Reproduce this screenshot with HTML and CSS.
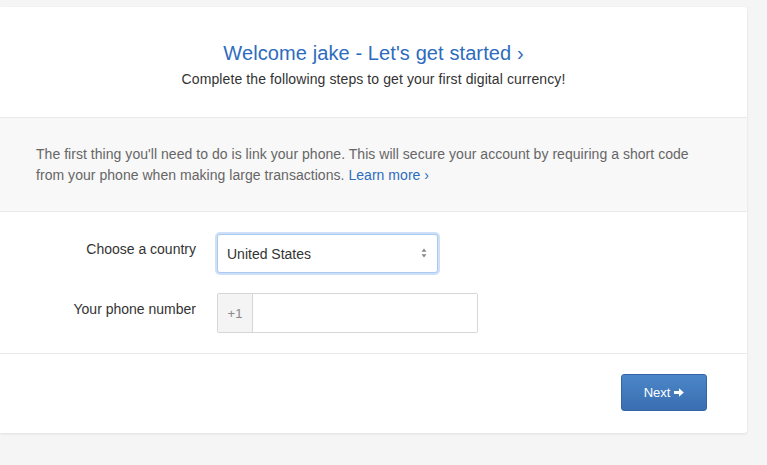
FILE: index.html
```html
<!DOCTYPE html>
<html>
<head>
<meta charset="utf-8">
<link rel="stylesheet" href="styles.css">
</head>
<body>
<div class="card">
  <div class="header">
    <h1 class="title">Welcome jake - Let's get started ›</h1>
    <p class="subtitle">Complete the following steps to get your first digital currency!</p>
  </div>
  <div class="intro">
    <p>The first thing you'll need to do is link your phone. This will secure your account by requiring a short code from your phone when making large transactions. <a href="#" class="link">Learn more ›</a></p>
  </div>
  <div class="form">
    <div class="row">
      <label class="label">Choose a country</label>
      <div class="select-wrap">
        <select class="select"><option>United States</option></select>
        <span class="arrows">
          <svg width="6" height="10" viewBox="0 0 6 10"><path d="M3 0.5 L5.5 3.8 H0.5 Z M3 9.5 L5.5 6.2 H0.5 Z" fill="#888"/></svg>
        </span>
      </div>
    </div>
    <div class="row">
      <label class="label">Your phone number</label>
      <div class="input-group">
        <span class="addon">+1</span>
        <input class="phone" type="text">
      </div>
    </div>
  </div>
  <div class="footer">
    <button class="btn">Next <svg class="arrow" width="10" height="9" viewBox="0 0 10 9"><path d="M0 3 H5 V0.2 L9.8 4.5 L5 8.8 V6 H0 Z" fill="#fff"/></svg></button>
  </div>
</div>
</body>
</html>
```
FILE: styles.css
```css
* { box-sizing: border-box; }
html, body { margin: 0; padding: 0; }
body {
  background: #f5f5f5;
  font-family: "Liberation Sans", Arial, Helvetica, sans-serif;
  color: #333;
  height: 465px;
  overflow: hidden;
}
.card {
  margin-top: 7px;
  width: 747px;
  background: #fff;
  border-radius: 0 3px 3px 0;
  box-shadow: 0 1px 3px rgba(0,0,0,0.09);
}
.header {
  height: 111px;
  border-bottom: 1px solid #e9e9e9;
  text-align: center;
  padding-top: 33px;
}
.title {
  margin: 0;
  font-size: 20px;
  letter-spacing: 0.1px;
  font-weight: normal;
  color: #2d6cbd;
  line-height: 26px;
}
.subtitle {
  margin: 4px 0 0;
  font-size: 14px;
  letter-spacing: 0.1px;
  line-height: 18px;
  color: #333;
}
.intro {
  background: #f8f8f8;
  border-bottom: 1px solid #e9e9e9;
  padding: 26px 36px 25px;
}
.intro p {
  margin: 0;
  font-size: 14px;
  letter-spacing: 0.04px;
  line-height: 21px;
  color: #666;
}
.link { color: #2d6cbd; text-decoration: none; }
.form {
  border-bottom: 1px solid #e9e9e9;
  padding: 21px 0 20px;
  display: flex;
  flex-direction: column;
  gap: 20px;
}
.row {
  display: flex;
  align-items: flex-start;
  gap: 21px;
}
.label {
  width: 196px;
  text-align: right;
  font-size: 14px;
  line-height: 18px;
  padding-top: 7px;
  color: #333;
}
.select-wrap {
  position: relative;
  margin-top: 1px;
}
.select {
  appearance: none;
  -webkit-appearance: none;
  width: 221px;
  height: 39px;
  margin: 0;
  border: 1px solid #a9c9ee;
  border-radius: 3px;
  box-shadow: 0 0 0 2px #cde0f7;
  background: #fff;
  font-family: inherit;
  font-size: 14px;
  color: #333;
  padding: 0 9px;
  outline: none;
}
.arrows {
  position: absolute;
  right: 11px;
  top: 14px;
  display: flex;
}
.input-group {
  display: flex;
  width: 261px;
  height: 40px;
  border: 1px solid #d6d6d6;
  border-radius: 2px;
}
.addon {
  width: 35px;
  background: #f4f4f4;
  border-right: 1px solid #d6d6d6;
  color: #888;
  font-size: 13px;
  display: flex;
  align-items: center;
  justify-content: center;
}
.phone {
  flex: 1;
  border: 0;
  outline: none;
  font-family: inherit;
  font-size: 14px;
  padding: 0 8px;
  min-width: 0;
}
.footer {
  height: 79px;
  display: flex;
  justify-content: flex-end;
  padding: 20px 40px 0 0;
}
.btn {
  width: 86px;
  height: 37px;
  border: 1px solid #3465a6;
  border-radius: 3px;
  background: linear-gradient(#4b87c8, #3a6eb1);
  color: #fff;
  font-family: inherit;
  font-size: 13px;
  display: flex;
  align-items: center;
  justify-content: center;
  gap: 4px;
  padding: 0;
}
.arrow { display: block; }
```
